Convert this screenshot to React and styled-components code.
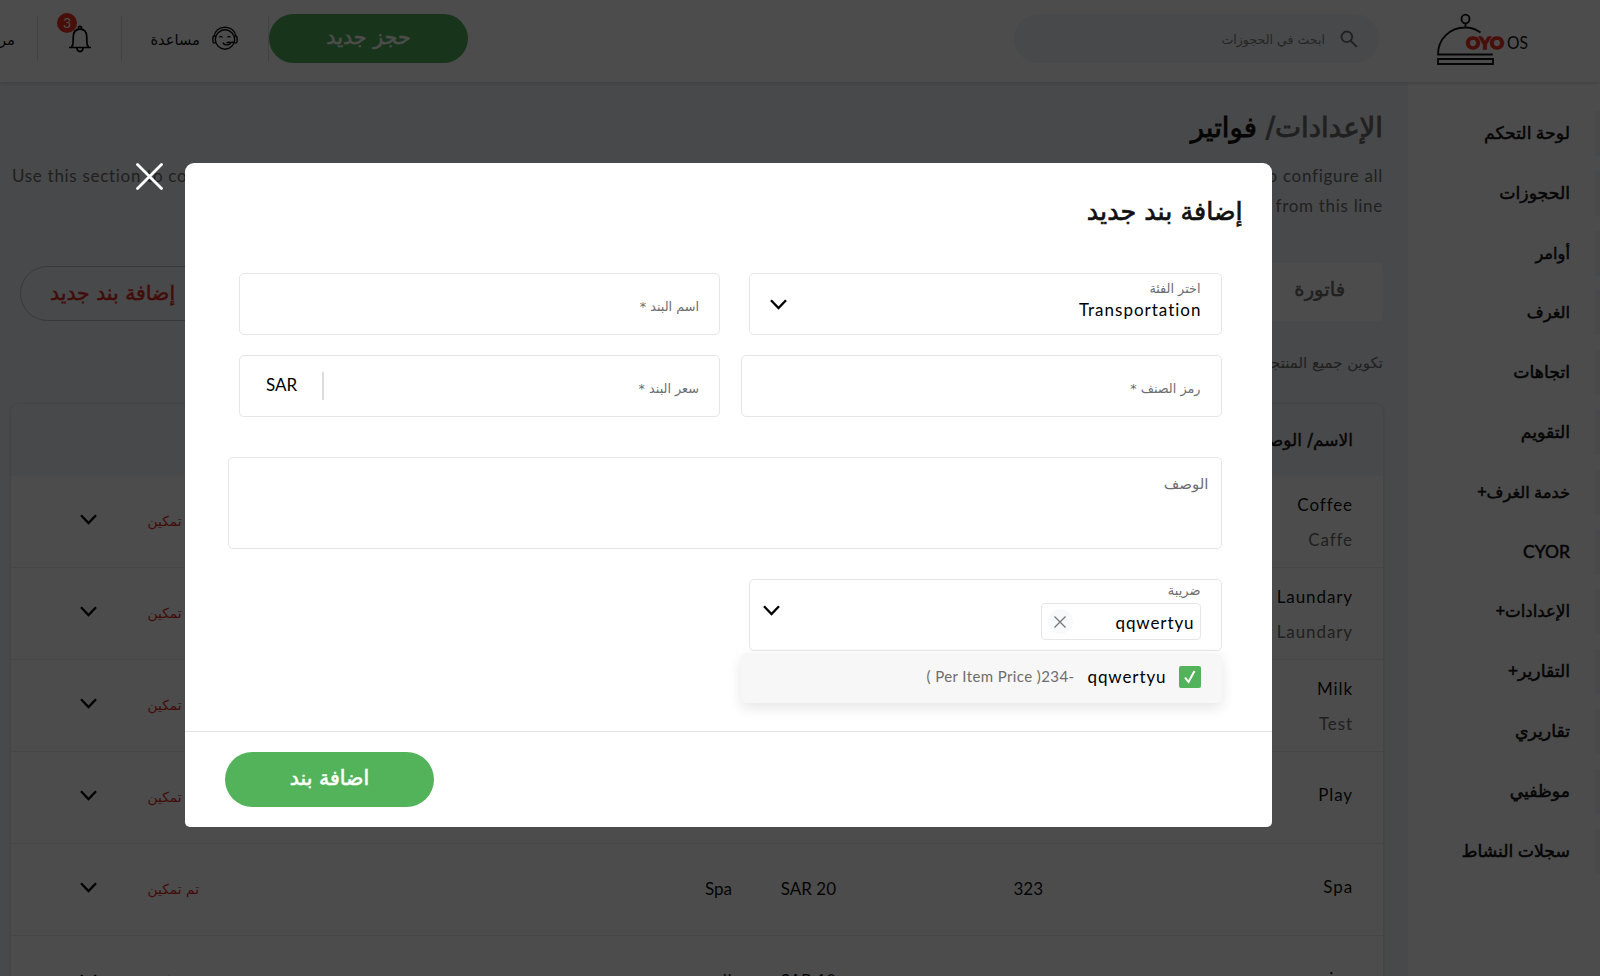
import styled, { createGlobalStyle } from "styled-components";

const GlobalStyle = createGlobalStyle`
* {
  box-sizing: border-box;
}
body {
  margin: 0;
  overflow: hidden;
  font-family: Lato, "DejaVu Sans", sans-serif;
  color: #111111;
}
`;

const Page = styled.div`
  direction: rtl;
  width: 1600px;
  height: 976px;
  overflow: hidden;
  background: #f2f4f7;
`;

/* header */
const Header = styled.header`
  position: relative;
  display: flex;
  align-items: flex-start;
  height: 82px;
  padding: 14px 71px 0 0;
  background: #ffffff;
  box-shadow: 0 1px 4px rgba(0, 0, 0, 0.16);
`;
const Logo = styled.svg`
  flex: none;
  width: 92px;
  height: 52px;
  overflow: visible;
`;
const Search = styled.div`
  flex: none;
  display: flex;
  align-items: center;
  gap: 15px;
  width: 365px;
  height: 49px;
  margin-right: 58px;
  padding: 1px 21px 0 0;
  border-radius: 25px;
  background: #f2f4f7;
  font-family: "DejaVu Sans", sans-serif;
  font-size: 12.6px;
  color: #7d7d7d;
`;
const BookingButton = styled.button`
  flex: none;
  width: 199px;
  height: 49px;
  margin-right: 546px;
  padding: 0 0 3px;
  border: 0;
  border-radius: 25px;
  background: #53b35a;
  color: #ffffff;
  font-family: "DejaVu Sans", sans-serif;
  font-size: 20.7px;
  -webkit-text-stroke: 0.5px;
`;
const HeaderItem = styled.div`
  position: relative;
  flex: none;
  display: flex;
  align-items: center;
  gap: 12px;
  width: ${(p) => p.$width}px;
  height: 45px;
  margin-top: 2px;
  padding-top: 1px;
  padding-right: ${(p) => p.$pad}px;
  border-right: 1px solid #dedede;
  font-family: "DejaVu Sans", sans-serif;
  font-size: 14.7px;
`;
const Badge = styled.span`
  position: absolute;
  top: -3px;
  left: 19px;
  width: 20px;
  height: 20px;
  border-radius: 50%;
  background: #ee3124;
  color: #ffffff;
  font: 14px/19px Lato, sans-serif;
  text-align: center;
`;

/* sidebar */
const Body = styled.div`
  display: flex;
  height: 894px;
`;
const Sidebar = styled.nav`
  flex: none;
  display: flex;
  flex-direction: column;
  gap: 14.8px;
  width: 192px;
  padding-top: 29px;
  background: #ffffff;
`;
const SidebarItem = styled.a`
  height: 45px;
  padding-right: 25px;
  border-right: 5px solid #f2f4f7;
  font-family: Lato, "DejaVu Sans", sans-serif;
  font-size: ${(p) => p.$size || 17.3}px;
  line-height: 44px;
  white-space: nowrap;
  -webkit-text-stroke: 0.5px;
`;

/* main section */
const Main = styled.main`
  width: 1408px;
  padding: 24px 25px 0 11px;
`;
const Title = styled.h1`
  margin: 0;
  font: 400 27.6px/44px "DejaVu Sans", sans-serif;
  height: 44px;
  -webkit-text-stroke: 0.8px;
`;
const Crumb = styled.span`
  color: #6d6d6d;
`;
const Intro = styled.p`
  display: flex;
  flex-wrap: wrap;
  justify-content: space-between;
  direction: ltr;
  margin: 11px 0 0;
  padding-left: 1px;
  color: #6d6d6d;
  font-size: 17px;
  line-height: 30px;
  letter-spacing: 0.7px;
`;
const IntroEnd = styled.span`
  width: 100%;
  text-align: right;
`;
const TabRow = styled.div`
  display: flex;
  align-items: flex-end;
  justify-content: space-between;
  height: 59px;
  margin-top: 41px;
  padding-left: 9px;
`;
const Tab = styled.div`
  width: 185px;
  height: 58px;
  padding-right: 38px;
  border-radius: 4px;
  background: #ffffff;
  color: #6d6d6d;
  font: 19.6px/54px "DejaVu Sans", sans-serif;
  -webkit-text-stroke: 0.5px;
`;
const AddButton = styled.button`
  width: 205px;
  height: 55px;
  padding: 0 0 2px 29px;
  border: 1px solid #b9bcc0;
  border-radius: 28px;
  background: transparent;
  color: #dc2a20;
  font: 20.4px "DejaVu Sans", sans-serif;
  text-align: left;
  -webkit-text-stroke: 0.5px;
`;
const Note = styled.p`
  margin: 27px 0 0;
  color: #6d6d6d;
  font: 15px/30px "DejaVu Sans", sans-serif;
`;
const Table = styled.section`
  margin-top: 26px;
  border-radius: 8px 8px 0 0;
  background: #ffffff;
  box-shadow: 0 0 3px rgba(0, 0, 0, 0.16);
`;
const TableHead = styled.div`
  height: 72px;
  padding-right: 30px;
  border-radius: 8px 8px 0 0;
  background: #f2f4f7;
  font: 17px/73px "DejaVu Sans", sans-serif;
  -webkit-text-stroke: 0.4px;
`;
const TableRow = styled.div`
  display: grid;
  grid-template-columns: 310px 207px 104px 533px 102px 1fr;
  height: 92px;
  padding-right: 30px;
  border-bottom: 1px solid #ebebeb;
  font-size: 17px;
  line-height: 90px;
`;
const NameCell = styled.div`
  display: flex;
  flex-direction: column;
  justify-content: center;
  gap: 5px;
  padding-top: ${(p) => (p.$double ? 2 : 0)}px;
  padding-bottom: ${(p) => (p.$double ? 0 : 6)}px;
  line-height: 30px;
  letter-spacing: 0.9px;
`;
const Muted = styled.span`
  color: #6d6d6d;
`;
const Status = styled.div`
  color: #dc2a20;
  font-family: "DejaVu Sans", sans-serif;
  font-size: 13.8px;
`;
const RowIcon = styled.div`
  padding-top: 38px;
  line-height: 0;
`;

/* modal */
const Overlay = styled.div`
  position: fixed;
  inset: 0;
  display: flex;
  align-items: flex-start;
  gap: 22px;
  padding: 163px 0 0 136px;
  background: rgba(0, 0, 0, 0.7);
`;
const Modal = styled.div`
  direction: rtl;
  display: flex;
  flex-direction: column;
  width: 1086.5px;
  height: 663.5px;
  border-radius: 9px 9px 5px 5px;
  background: #ffffff;
`;
const ModalTitle = styled.h2`
  margin: 0;
  padding: 25px 29px 0 0;
  height: 110px;
  font: 400 25.4px/46px "DejaVu Sans", sans-serif;
  -webkit-text-stroke: 0.7px;
`;
const Form = styled.form`
  flex: 1;
  padding: 0 50px 0 54px;
`;
const FormRow = styled.div`
  display: flex;
  justify-content: space-between;
  margin-bottom: 20px;
`;
const Field = styled.div`
  position: relative;
  display: flex;
  justify-content: space-between;
  width: ${(p) => p.$width || 481}px;
  height: ${(p) => p.$height || 62}px;
  padding: 0 20px;
  border: 1px solid #e6e6e6;
  border-radius: 5px;
`;
const FieldLabel = styled.label`
  color: #6d6d6d;
  font: ${(p) => p.$size || 12.8}px/18px "DejaVu Sans", sans-serif;
  padding-top: ${(p) => p.$top || 24}px;
`;
const SelectText = styled.div`
  display: flex;
  flex-direction: column;
  gap: 2px;
`;
const Value = styled.span`
  direction: ltr;
  color: #000000;
  font-size: 17px;
  line-height: 20px;
  letter-spacing: ${(p) => p.$spacing || 0.9}px;
  margin-right: -1px;
`;
const ArrowBox = styled.div`
  padding-top: ${(p) => p.$top}px;
  margin-left: ${(p) => p.$left || 0}px;
  line-height: 0;
`;
const Currency = styled.div`
  height: 28px;
  margin-top: 16px;
  padding: 0 25px 0 6px;
  border-right: 2px solid #dcdcdc;
  color: #000000;
  font-size: 17px;
  line-height: 26px;
`;
const TextArea = styled.div`
  height: 92px;
  margin: 40px 0 30px -11px;
  padding: 15px 12px;
  border: 1px solid #e6e6e6;
  border-radius: 5px;
  color: #6d6d6d;
  font: 15px/22px "DejaVu Sans", sans-serif;
`;
const Chip = styled.div`
  display: flex;
  align-items: center;
  justify-content: space-between;
  width: 160px;
  height: 37px;
  margin-top: 1px;
  padding: 2px 6px 0;
  border: 1px solid #e6e6e6;
  border-radius: 4px;
`;
const ChipRemove = styled.span`
  display: flex;
  align-items: center;
  justify-content: center;
  width: 25px;
  height: 25px;
  margin-bottom: 2px;
  border-radius: 50%;
  background: #f7f9fb;
`;
const Dropdown = styled.div`
  position: absolute;
  top: 73px;
  right: -1px;
  display: flex;
  align-items: center;
  gap: 13px;
  width: 481px;
  height: 50px;
  padding: 0 21px 3px 0;
  border-radius: 5px;
  background: #f7f7f7;
  box-shadow: 0 5px 14px rgba(0, 0, 0, 0.1);
`;
const CheckBox = styled.span`
  display: flex;
  align-items: center;
  justify-content: center;
  width: 22px;
  height: 22px;
  border-radius: 2px;
  background: #53b35a;
`;
const Hint = styled.span`
  direction: ltr;
  padding-bottom: 2px;
  color: #6d6d6d;
  font-size: 15px;
  letter-spacing: 0.4px;
`;
const ModalFooter = styled.footer`
  display: flex;
  justify-content: flex-end;
  height: 95.5px;
  padding: 20px 0 0 40px;
  border-top: 1px solid #e4e4e4;
`;
const SubmitButton = styled.button`
  width: 209px;
  height: 55px;
  padding: 0 0 4px;
  border: 0;
  border-radius: 28px;
  background: #53b35a;
  color: #ffffff;
  font: 20.5px "DejaVu Sans", sans-serif;
  -webkit-text-stroke: 0.6px;
`;

const menu = [
  { text: "لوحة التحكم" },
  { text: "الحجوزات" },
  { text: "أوامر", size: 16.3 },
  { text: "الغرف", size: 16.3 },
  { text: "اتجاهات" },
  { text: "التقويم" },
  { text: "خدمة الغرف+", size: 16.3 },
  { text: "CYOR", size: 17.5 },
  { text: "الإعدادات+", size: 16.6 },
  { text: "التقارير+" },
  { text: "تقاريري" },
  { text: "موظفيي" },
  { text: "سجلات النشاط" },
];

const rows = [
  { name: "Coffee", note: "Caffe" },
  { name: "Laundary", note: "Laundary" },
  { name: "Milk", note: "Test" },
  { name: "Play" },
  { name: "Spa", code: "323", price: "SAR 20", type: "Spa" },
  { name: "rice", price: "SAR 10", type: "الغ" },
];

const Chevron = () => (
  <svg width="17" height="11" viewBox="0 0 17 11" fill="none" stroke="#000000" strokeWidth="2.3">
    <path d="M1 1.2 8.5 9 16 1.2" />
  </svg>
);

const OyoLogo = () => (
  <Logo viewBox="0 0 92 52" fill="none" stroke="#111111" strokeWidth="1.8" direction="ltr">
    <ellipse cx="28.5" cy="5" rx="4" ry="4.4" strokeWidth="1.9" />
    <path d="M28.5 9.500v4M1 40.500C1 25 13 13.500 28 13.500c6 0 11 1.500 15.500 5M.2 40.500h55.500M1 45h55v5H1z" />
    <g stroke="none" fontFamily="Lato, sans-serif">
      <text x="29" y="34.500" fontSize="17" fontWeight="900" fill="#ee3124" stroke="#ee3124" strokeWidth="1.300" textLength="38" lengthAdjust="spacingAndGlyphs">OYO</text>
      <text x="70" y="35" fontSize="18" fill="#111111" textLength="21" lengthAdjust="spacingAndGlyphs">OS</text>
    </g>
  </Logo>
);

const Headset = () => (
  <svg width="26" height="26" viewBox="0 0 26 26" fill="none" stroke="#111111" strokeWidth="1.4">
    <circle cx="13" cy="13.500" r="9.700" />
    <path d="M2 10.500C3 4.500 7.500 1.200 13 1.200S23 4.500 24 10.500" />
    <path d="M3.300 10H2.200C1.300 10 .8 11 .8 13.500S1.300 17 2.200 17h1.100M22.700 10h1.100c.9 0 1.400 1 1.400 3.500s-.5 3.500-1.400 3.500h-1.100" />
    <path d="M7.500 11.500c.5-1.500 2.300-1.500 2.800 0M15.500 11.500c.5-1.500 2.300-1.500 2.800 0M11 16.500c1 3.200 6.500 3.200 7.800 0M14.500 17c2-1.500 3.500-.5 4.500-.5l4-.5" />
  </svg>
);

const Bell = () => (
  <svg width="22" height="28" viewBox="0 0 22 28" fill="none" stroke="#000000" strokeWidth="1.7">
    <path d="M0 22.500h22M2.500 22.200c1.200-1.500 1.700-3 1.700-6v-4C4.200 7 7 4.200 11 4.200s6.800 2.800 6.800 8v4c0 3 .5 4.500 1.700 6M9.300 4.200c-.4-3.900 3.800-3.900 3.400 0M8 23c.3 4.800 5.700 4.800 6 0" />
  </svg>
);

const App = () => {
  return (
    <>
      <GlobalStyle />
      <Page>
        <Header>
          <OyoLogo />
          <Search>
            <svg width="18" height="18" viewBox="0 0 18 18" fill="none" stroke="#6d6d6d" strokeWidth="1.9">
              <circle cx="6.800" cy="6.800" r="5.300" />
              <path d="m10.800 10.800 6 6" />
            </svg>
            ابحث في الحجوزات
          </Search>
          <BookingButton>حجز جديد</BookingButton>
          <HeaderItem $width={147} $pad={30}>
            <Headset />
            مساعدة
          </HeaderItem>
          <HeaderItem $width={84} $pad={30}>
            <Bell />
            <Badge>3</Badge>
          </HeaderItem>
          <HeaderItem $width={60} $pad={22}>
            مرحبا
          </HeaderItem>
        </Header>
        <Body>
          <Sidebar>
            {menu.map((item) => (
              <SidebarItem key={item.text} $size={item.size}>{item.text}</SidebarItem>
            ))}
          </Sidebar>
          <Main>
            <Title>
              <Crumb>الإعدادات/</Crumb> فواتير
            </Title>
            <Intro>
              <span>Use this section to configure</span>
              <span>to configure all</span>
              <IntroEnd>from this line</IntroEnd>
            </Intro>
            <TabRow>
              <Tab>فاتورة</Tab>
              <AddButton>إضافة بند جديد</AddButton>
            </TabRow>
            <Note>تكوين جميع المنتجات</Note>
            <Table>
              <TableHead>الاسم/ الوصف</TableHead>
              {rows.map((row) => (
                <TableRow key={row.name}>
                  <NameCell $double={Boolean(row.note)}>
                    <span>{row.name}</span>
                    {row.note && <Muted>{row.note}</Muted>}
                  </NameCell>
                  <div>{row.code}</div>
                  <div>{row.price}</div>
                  <div>{row.type}</div>
                  <Status>تم تمكين</Status>
                  <RowIcon>
                    <Chevron />
                  </RowIcon>
                </TableRow>
              ))}
            </Table>
          </Main>
        </Body>
      </Page>
      <Overlay>
        <svg width="27" height="28" viewBox="0 0 27 28" stroke="#ffffff" strokeWidth="2.800" strokeLinecap="round">
          <path d="m1.500 1.500 24 24M25.500 1.500l-24 24" />
        </svg>
        <Modal>
          <ModalTitle>إضافة بند جديد</ModalTitle>
          <Form>
            <FormRow>
              <Field $width={473}>
                <SelectText>
                  <FieldLabel $top={6}>اختر الفئة</FieldLabel>
                  <Value $spacing={1}>Transportation</Value>
                </SelectText>
                <ArrowBox $top={25}>
                  <Chevron />
                </ArrowBox>
              </Field>
              <Field>
                <FieldLabel>اسم البند *</FieldLabel>
              </Field>
            </FormRow>
            <FormRow>
              <Field>
                <FieldLabel>رمز الصنف *</FieldLabel>
              </Field>
              <Field>
                <FieldLabel>سعر البند *</FieldLabel>
                <Currency>SAR</Currency>
              </Field>
            </FormRow>
            <TextArea>الوصف</TextArea>
            <Field $width={473} $height={72}>
              <SelectText>
                <FieldLabel $top={2} $size={13}>ضريبة</FieldLabel>
                <Chip>
                  <Value>qqwertyu</Value>
                  <ChipRemove>
                    <svg width="12" height="12" viewBox="0 0 12 12" stroke="#777777" strokeWidth="1.300">
                      <path d="m.5.5 11 11M11.500.5l-11 11" />
                    </svg>
                  </ChipRemove>
                </Chip>
              </SelectText>
              <ArrowBox $top={25} $left={-7}>
                <Chevron />
              </ArrowBox>
              <Dropdown>
                <CheckBox>
                  <svg width="12" height="14" viewBox="0 0 12 14" fill="none" stroke="#ffffff" strokeWidth="2">
                    <path d="m1 7.500 3.500 4.500L10.500 1" />
                  </svg>
                </CheckBox>
                <Value>qqwertyu</Value>
                <Hint>( Per Item Price )234-</Hint>
              </Dropdown>
            </Field>
          </Form>
          <ModalFooter>
            <SubmitButton>اضافة بند</SubmitButton>
          </ModalFooter>
        </Modal>
      </Overlay>
    </>
  );
};

export default App;
